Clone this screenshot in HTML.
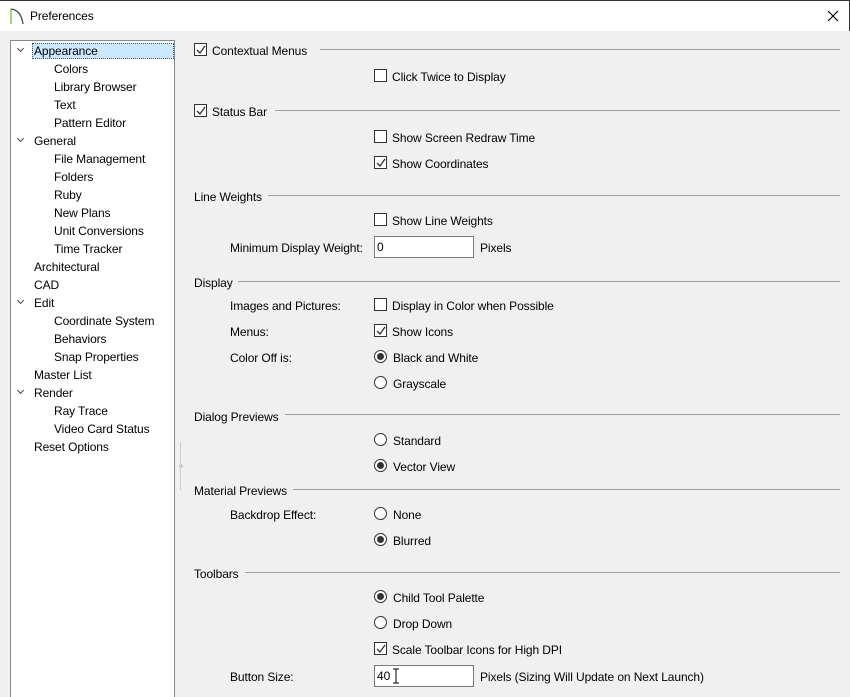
<!DOCTYPE html>
<html><head><meta charset="utf-8"><style>
*{margin:0;padding:0;box-sizing:border-box}
html,body{width:850px;height:697px;overflow:hidden}
body{background:#f0f0f0;font-family:"Liberation Sans",sans-serif;font-size:12px;letter-spacing:-0.1px;color:#000;position:relative}
.a{position:absolute;white-space:nowrap;line-height:14px}
#tb{position:absolute;left:0;top:0;width:850px;height:31px;background:#fff;border-top:1px solid #333;border-right:1px solid #333}
#tree{position:absolute;left:10px;top:40px;width:165px;height:657px;background:#fff;border:1px solid #828790;border-bottom:none}
.cb{position:absolute;width:13px;height:13px;border:1px solid #333;background:#fff}
.rb{position:absolute;width:13px;height:13px;border:1px solid #333;border-radius:50%;background:#fff}
.rb.on::after{content:"";position:absolute;left:2px;top:2px;width:7px;height:7px;border-radius:50%;background:#333}
.ln{position:absolute;height:1px;background:#a0a0a0;right:10px}
.inp{position:absolute;width:100px;height:22px;border:1px solid #7a7a7a;background:#fff;padding:3px 2px;line-height:14px}
.chev{position:absolute;width:5px;height:5px;border-right:1.5px solid #444;border-bottom:1.5px solid #444;transform:rotate(45deg)}
</style></head><body>
<div id="tb">
<svg class="a" style="left:9px;top:6px" width="16" height="18"><path d="M2 17V2" stroke="#8dc63f" stroke-width="1.5"/><path d="M2 2Q12 3 14 17" stroke="#444" stroke-width="1.3" fill="none"/></svg>
<div class="a" style="left:30px;top:8px">Preferences</div>
<svg class="a" style="left:827px;top:9px" width="12" height="12"><path d="M1 1L11 11M11 1L1 11" stroke="#000" stroke-width="1.2"/></svg>
</div>
<div id="tree"></div>
<div class="a" style="left:32px;top:43px;width:142px;height:16px;background:#cce8ff;border:1px dotted #555"></div>
<div class="chev" style="left:18px;top:46px"></div>
<div class="chev" style="left:18px;top:136px"></div>
<div class="chev" style="left:18px;top:298px"></div>
<div class="chev" style="left:18px;top:388px"></div>
<div class="a" style="left:34px;top:44px">Appearance</div>
<div class="a" style="left:54px;top:62px">Colors</div>
<div class="a" style="left:54px;top:80px">Library Browser</div>
<div class="a" style="left:54px;top:98px">Text</div>
<div class="a" style="left:54px;top:116px">Pattern Editor</div>
<div class="a" style="left:34px;top:134px">General</div>
<div class="a" style="left:54px;top:152px">File Management</div>
<div class="a" style="left:54px;top:170px">Folders</div>
<div class="a" style="left:54px;top:188px">Ruby</div>
<div class="a" style="left:54px;top:206px">New Plans</div>
<div class="a" style="left:54px;top:224px">Unit Conversions</div>
<div class="a" style="left:54px;top:242px">Time Tracker</div>
<div class="a" style="left:34px;top:260px">Architectural</div>
<div class="a" style="left:34px;top:278px">CAD</div>
<div class="a" style="left:34px;top:296px">Edit</div>
<div class="a" style="left:54px;top:314px">Coordinate System</div>
<div class="a" style="left:54px;top:332px">Behaviors</div>
<div class="a" style="left:54px;top:350px">Snap Properties</div>
<div class="a" style="left:34px;top:368px">Master List</div>
<div class="a" style="left:34px;top:386px">Render</div>
<div class="a" style="left:54px;top:404px">Ray Trace</div>
<div class="a" style="left:54px;top:422px">Video Card Status</div>
<div class="a" style="left:34px;top:440px">Reset Options</div>
<div class="a" style="left:180px;top:442px;width:1px;height:48px;background:#ccc"></div>
<div class="a" style="left:179px;top:464px;width:4px;height:4px;border-radius:50%;background:#ccc"></div>

<div class="cb" style="left:194px;top:43px"></div><svg class="a" style="left:196px;top:45px" width="10" height="10"><path d="M1 5L4 8L9 1" stroke="#333" stroke-width="1.3" fill="none"/></svg>
<div class="a" style="left:212px;top:44px">Contextual Menus</div><div class="ln" style="left:320px;top:49px"></div>
<div class="cb" style="left:374px;top:69px"></div><div class="a" style="left:392px;top:70px">Click Twice to Display</div>

<div class="cb" style="left:194px;top:104px"></div><svg class="a" style="left:196px;top:106px" width="10" height="10"><path d="M1 5L4 8L9 1" stroke="#333" stroke-width="1.3" fill="none"/></svg>
<div class="a" style="left:212px;top:105px">Status Bar</div><div class="ln" style="left:275px;top:110px"></div>
<div class="cb" style="left:374px;top:130px"></div><div class="a" style="left:392px;top:131px">Show Screen Redraw Time</div>
<div class="cb" style="left:374px;top:156px"></div><svg class="a" style="left:376px;top:158px" width="10" height="10"><path d="M1 5L4 8L9 1" stroke="#333" stroke-width="1.3" fill="none"/></svg><div class="a" style="left:392px;top:157px">Show Coordinates</div>

<div class="a" style="left:194px;top:190px">Line Weights</div><div class="ln" style="left:268px;top:195px"></div>
<div class="cb" style="left:374px;top:213px"></div><div class="a" style="left:392px;top:214px">Show Line Weights</div>
<div class="a" style="left:230px;top:241px">Minimum Display Weight:</div><div class="inp" style="left:374px;top:236px">0</div><div class="a" style="left:480px;top:241px">Pixels</div>

<div class="a" style="left:194px;top:276px">Display</div><div class="ln" style="left:238px;top:281px"></div>
<div class="a" style="left:230px;top:299px">Images and Pictures:</div><div class="cb" style="left:374px;top:298px"></div><div class="a" style="left:392px;top:299px">Display in Color when Possible</div>
<div class="a" style="left:230px;top:325px">Menus:</div><div class="cb" style="left:374px;top:324px"></div><svg class="a" style="left:376px;top:326px" width="10" height="10"><path d="M1 5L4 8L9 1" stroke="#333" stroke-width="1.3" fill="none"/></svg><div class="a" style="left:392px;top:325px">Show Icons</div>
<div class="a" style="left:230px;top:351px">Color Off is:</div><div class="rb on" style="left:374px;top:350px"></div><div class="a" style="left:393px;top:351px">Black and White</div>
<div class="rb" style="left:374px;top:376px"></div><div class="a" style="left:393px;top:377px">Grayscale</div>

<div class="a" style="left:194px;top:410px">Dialog Previews</div><div class="ln" style="left:285px;top:414px"></div>
<div class="rb" style="left:374px;top:433px"></div><div class="a" style="left:393px;top:434px">Standard</div>
<div class="rb on" style="left:374px;top:459px"></div><div class="a" style="left:393px;top:460px">Vector View</div>

<div class="a" style="left:194px;top:484px">Material Previews</div><div class="ln" style="left:293px;top:489px"></div>
<div class="a" style="left:230px;top:508px">Backdrop Effect:</div><div class="rb" style="left:374px;top:507px"></div><div class="a" style="left:393px;top:508px">None</div>
<div class="rb on" style="left:374px;top:533px"></div><div class="a" style="left:393px;top:534px">Blurred</div>

<div class="a" style="left:194px;top:567px">Toolbars</div><div class="ln" style="left:245px;top:572px"></div>
<div class="rb on" style="left:374px;top:590px"></div><div class="a" style="left:393px;top:591px">Child Tool Palette</div>
<div class="rb" style="left:374px;top:616px"></div><div class="a" style="left:393px;top:617px">Drop Down</div>
<div class="cb" style="left:374px;top:642px"></div><svg class="a" style="left:376px;top:644px" width="10" height="10"><path d="M1 5L4 8L9 1" stroke="#333" stroke-width="1.3" fill="none"/></svg><div class="a" style="left:392px;top:643px">Scale Toolbar Icons for High DPI</div>
<div class="a" style="left:230px;top:670px">Button Size:</div><div class="inp" style="left:374px;top:665px">40</div>
<svg class="a" style="left:392px;top:668px" width="8" height="16"><path d="M1 1H7M4 1V15M1 15H7" stroke="#000" stroke-width="1"/></svg>
<div class="a" style="left:480px;top:670px">Pixels (Sizing Will Update on Next Launch)</div>
</body></html>
